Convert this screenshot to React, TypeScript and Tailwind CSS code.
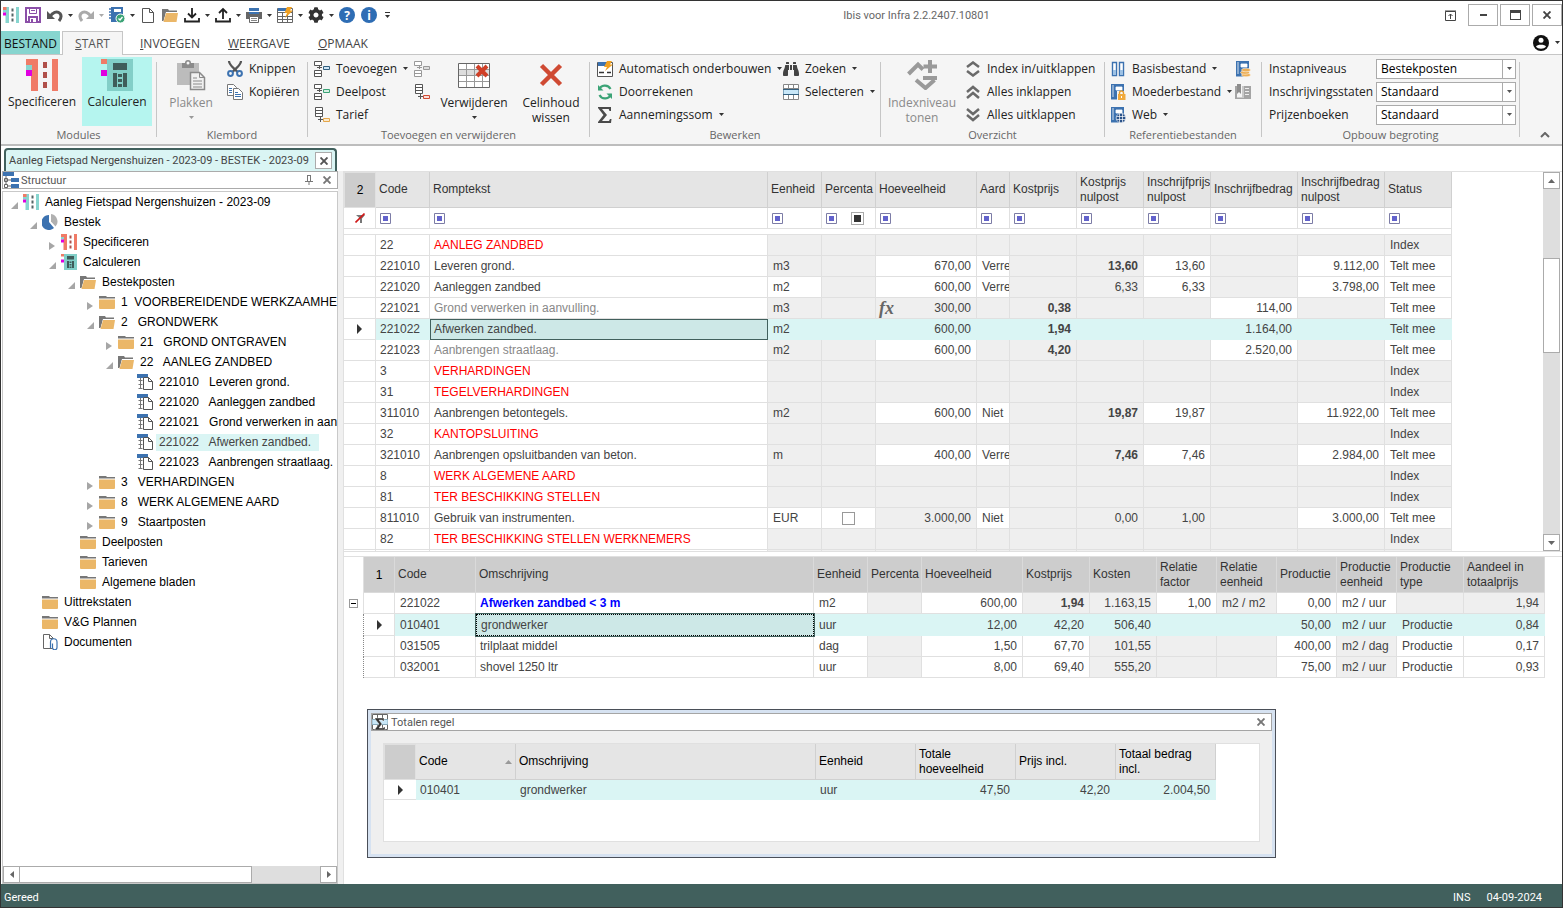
import type { ReactNode } from "react";
import clsx from "clsx";
import { FaBinoculars, FaCog } from "react-icons/fa";

/* ---------- Icons ---------- */

type IconProps = { size?: number; w?: number; h?: number; box?: string; children: ReactNode };

function Svg({ size = 16, w, h, box = "0 0 16 16", children }: IconProps) {
  return (
    <svg
      width={w ?? size}
      height={h ?? size}
      viewBox={box}
      fill="none"
      className="shrink-0"
      aria-hidden="true"
    >
      {children}
    </svg>
  );
}

const Caret = ({ color = "#333" }: { color?: string }) => (
  <Svg w={5} h={3} box="0 0 5 3">
    <path d="M0 0h5L2.500 3z" fill={color} />
  </Svg>
);

const LogoIcon = ({ size = 16, main = "#87d5cf", dots = "#566" }) => (
  <Svg size={size} box="0 0 32 32">
    <path d="M5 0h7v32H5zM26 0h6v32h-6z" fill={main} />
    <path d="M0 0h7v6H0z" fill="#f07b67" />
    <path d="M0 6h6v5H0z" fill="#87d5cf" />
    <path d="M0 11h6v6H0z" fill="#e000e0" />
    <path d="M17 3h4v6h-4zM17 13h4v6h-4zM17 23h4v6h-4z" fill={dots} />
  </Svg>
);

const SpecIcon = ({ size = 16 }) => <LogoIcon size={size} main="#f07b67" dots="#b0504a" />;

const CalcIcon = ({ size = 16 }) => (
  <Svg size={size} box="0 0 32 32">
    <path d="M6 0h26v32H6z" fill="#82cfc8" />
    <path d="M0 0h6v5H0z" fill="#f07b67" />
    <path d="M0 11h6v6H0z" fill="#e000e0" />
    <path d="M12 4h14v7H12zM12 14h4v14h-4zM22 14h4v14h-4zM17 15h4v3h-4zM17 20h4v3h-4zM17 25h4v3h-4z" fill="#3f5c5a" />
  </Svg>
);

const SaveIcon = () => (
  <Svg>
    <path d="M1 1h14v14H1z" fill="#fff" stroke="#8b4fa8" strokeWidth="2" />
    <path d="M4.500 2v4.500h7V2" stroke="#8b4fa8" />
    <path d="M6 3.500h4" stroke="#8b4fa8" />
    <path d="M3 9h10v6H3z" fill="#8b4fa8" />
    <path d="M5 11h6v4H5z" fill="#fff" />
    <path d="M6 12h2v3H6z" fill="#8b4fa8" />
  </Svg>
);

const UndoIcon = ({ color = "#555", flip = false }) => (
  <Svg>
    <g transform={flip ? "matrix(-1 0 0 1 16 0)" : undefined}>
      <path d="M3 10C5 5.500 10 3.500 13 6.500c2 2.500 1 5-1 7.500" stroke={color} strokeWidth="3" />
      <path d="M0 4v8h8z" fill={color} />
    </g>
  </Svg>
);

const BookCheckIcon = () => (
  <Svg>
    <path d="M2 0h12v15H2z" fill="#3c72b0" />
    <path d="M5 2h7v3H5z" fill="#fff" />
    <path d="M0 2h4M0 5h4M0 8h4M0 11h4" stroke="#3c72b0" strokeWidth="1.500" />
    <circle cx="11.500" cy="11.500" r="4.500" fill="#3ba376" stroke="#fff" />
    <path d="m9.500 11.500 1.500 1.500 2.500-3" stroke="#fff" strokeWidth="1.300" />
  </Svg>
);

const NewIcon = () => (
  <Svg>
    <path d="M2.500 1.500h7l4 4v10h-11z" fill="#fff" stroke="#555" />
    <path d="M9.500 1.500v4h4" stroke="#555" />
  </Svg>
);

const OpenFolderIcon = () => (
  <Svg>
    <path d="M0 2h6l1 1.500h8V6H4l-2.500 8H0z" fill="#777" />
    <path d="M4 5h12l-1.500 10H1.500z" fill="#fff" />
    <path d="M4 6h12l-1.500 9H1.500z" fill="#ebb768" />
  </Svg>
);

const FolderIcon = () => (
  <Svg>
    <path d="M0 2h7l1 1h8v1.500H0z" fill="#777" />
    <path d="M0 5.500h16V14a1 1 0 0 1-1 1H1a1 1 0 0 1-1-1z" fill="#ebb768" />
  </Svg>
);

const DownloadIcon = () => (
  <Svg>
    <path d="M8 1v9M4 6.500 8 10.500l4-4" stroke="#222" strokeWidth="1.800" />
    <path d="M1 11v3.500h14V11" stroke="#222" strokeWidth="1.800" />
  </Svg>
);

const UploadIcon = () => (
  <Svg>
    <path d="M8 12V2M4 6l4-4 4 4" stroke="#222" strokeWidth="1.800" />
    <path d="M1 11v3.500h14V11" stroke="#222" strokeWidth="1.800" />
  </Svg>
);

const PrinterIcon = () => (
  <Svg>
    <path d="M3 1h10v3H3z" fill="#3c72b0" />
    <path d="M0 5h16v7H0z" fill="#666" />
    <path d="M3 5h10v2H3z" fill="#3c72b0" />
    <path d="M3.500 9.500h9v6h-9z" fill="#fff" stroke="#666" />
    <path d="M5 11.500h6M5 13.500h6" stroke="#888" />
  </Svg>
);

const TableFlashIcon = () => (
  <Svg>
    <path d="M.5 1.500h15v14H.5zM.5 5.500h15M.5 9.500h15M.5 12.500h15M5.500 5.500v10M10.500 5.500v10" stroke="#666" fill="#fff" />
    <path d="M1 1h8v3H1z" fill="#3c72b0" />
    <path d="M10 0h5l-2 3.500h3L8 11l2-5H7.500z" fill="#f0a020" />
  </Svg>
);

const Disc = ({ children }: { children: string }) => (
  <Svg>
    <circle cx="8" cy="8" r="8" fill="#2e6db4" />
    <text x="8" y="12.500" textAnchor="middle" fontSize="12" fontWeight="700" fill="#fff" fontFamily="Open Sans, sans-serif">
      {children}
    </text>
  </Svg>
);

const PasteIcon = () => (
  <Svg w={30} h={32} box="0 0 30 32">
    <path d="M1 4h22v22H1z" fill="#bcbcbc" />
    <path d="M6 4h3a3 3 0 0 1 6 0h3v5H6z" fill="#8a8a8a" />
    <circle cx="12" cy="4" r="1.500" fill="#f5f5f5" />
    <path d="M14.500 13.500h9l5 5v12h-14z" fill="#f0f0f0" stroke="#8a8a8a" strokeWidth="1.500" />
    <path d="M23.500 13.500v5h5M17 19h4M17 22h9M17 25h9M17 28h9" stroke="#8a8a8a" />
  </Svg>
);

const CutIcon = () => (
  <Svg>
    <path d="M2 0c0 4 4 6 8.500 11M14 0c0 4-4 6-8.500 11" stroke="#555" strokeWidth="2.200" />
    <circle cx="3.500" cy="12.500" r="2.400" stroke="#3c72b0" strokeWidth="2" />
    <circle cx="12.500" cy="12.500" r="2.400" stroke="#3c72b0" strokeWidth="2" />
  </Svg>
);

const CopyIcon = () => (
  <Svg>
    <path d="M.5.500h6l3 3v8h-9z" fill="#fff" stroke="#777" />
    <path d="M2 4.500h3M2 6.500h3M2 8.500h3" stroke="#3c72b0" />
    <path d="M6.500 4.500h5l4 4v7h-9z" fill="#fff" stroke="#777" />
    <path d="M8 8.500h3M8 10.500h6M8 12.500h6" stroke="#3c72b0" />
  </Svg>
);

function NodeIcon({ tone = "#34607f", fill = "#cfe6f7", gray = "#555", list = false }) {
  return (
    <Svg>
      {list ? (
        <path d="M1.500.500h7v9h-7zM1.500 3.500h7M1.500 6.500h7" fill="#fff" stroke={gray} />
      ) : (
        <path d="M.5.500h7v4h-7zM.5 9.500h7v6h-7zM.5 12.500h7" fill="#fff" stroke={gray} />
      )}
      <path d={list ? "M4 12.500h5M6.500 10v5" : "M3 6.500h5M5.500 5v3"} stroke={gray} />
      <path d={list ? "M9.500 11.500h6v3h-6z" : "M9.500 5.500h6v3h-6z"} fill={fill} stroke={tone} />
    </Svg>
  );
}

const DeleteGridIcon = () => (
  <Svg w={32} h={26} box="0 0 32 26">
    <path d="M.5 1.500h31v24H.5z" fill="#fff" />
    <path d="M1 7h31v6H1z" fill="#ddd" />
    <path d="M1 7.500h30M1 13.500h30M1 19.500h30M8.500 2v23M16.500 2v23M24.500 2v23" stroke="#999" />
    <path d="M.5 1.500h31v24H.5z" stroke="#666" />
    <path d="m19 4 10 10M29 4 19 14" stroke="#cf3f27" strokeWidth="4" />
  </Svg>
);

const ClearIcon = () => (
  <Svg w={24} h={24} box="0 0 24 24">
    <path d="m2.500 2.500 19 19M21.500 2.500l-19 19" stroke="#cf4a33" strokeWidth="4.500" />
  </Svg>
);

const AutoIcon = () => (
  <Svg>
    <path d="M.5 1.500h15v14H.5z" fill="#fff" stroke="#555" />
    <path d="M1 1h8v4H1z" fill="#3c72b0" />
    <path d="M2 11.500h5M10 11.500h4" stroke="#333" strokeWidth="1.500" />
    <path d="M10 0h5l-2 3.500h3L8 10l2-4H7z" fill="#f0a020" />
  </Svg>
);

const RefreshIcon = () => (
  <Svg>
    <path d="M2 6a6.200 6.200 0 0 1 11.500-1M14 10a6.200 6.200 0 0 1-11.500 1" stroke="#3ba376" strokeWidth="2.200" />
    <path d="M1 1v5.500h5.500zM15 15V9.500H9.500z" fill="#3ba376" />
  </Svg>
);

const SigmaIcon = () => (
  <Svg>
    <path d="M1 0h13v4h-1.500l-.8-2H5l5 6-5 6h7l1-2h1.500l-.5 4H1v-1l5.500-7L1 1z" fill="#4a4a4a" />
  </Svg>
);

const SelectRowsIcon = () => (
  <Svg>
    <path d="M.5.500h15v15H.5zM.5 4.500h15M5.500.500v15M10.500.500v15" fill="#fff" stroke="#888" />
    <path d="M0 5.500h16v5H0z" fill="#c8e7f8" stroke="#34607f" />
  </Svg>
);

const IndexLevelIcon = () => (
  <Svg w={30} h={30} box="0 0 30 30">
    <path d="m1.500 14 9.500-9.500 5 5M9 20l9.500 8 9-8" stroke="#9a9a9a" strokeWidth="4" />
    <path d="M23 0v13M16.500 6.500H30M16 18h14" stroke="#9a9a9a" strokeWidth="4" />
  </Svg>
);

const Chevrons = ({ d }: { d: string }) => (
  <Svg>
    <path d={d} stroke="#6a6a6a" strokeWidth="2.500" />
  </Svg>
);

const BindersIcon = () => (
  <Svg>
    <path d="M2.500 1.500h4v13h-4zM9.500 1.500h4v13h-4z" fill="#fff" stroke="#3c72b0" strokeWidth="1.400" />
    <path d="M3 9h3v5H3zM10 9h3v5h-3z" fill="#9dc1e4" />
  </Svg>
);

const BookIcon = ({ children }: { children: ReactNode }) => (
  <Svg>
    <path d="M1 0h13v13H1z" fill="#3c72b0" />
    <path d="M3 1v12M6 3h6v3H6z" stroke="#fff" fill="#fff" strokeWidth=".8" />
    <path d="M1 13h8v2.500H1z" fill="#3c72b0" />
    {children}
  </Svg>
);

const LockBook = () => (
  <BookIcon>
    <path d="M7 7h9v9H7z" fill="#f5f5f5" />
    <path d="M9.500 10V9a2 2 0 0 1 4 0v1" stroke="#e59b2b" strokeWidth="1.400" />
    <path d="M8 10h7.500v6H8z" fill="#f0a93c" />
    <path d="M11 12h1v2h-1z" fill="#fff" />
  </BookIcon>
);

const WebBook = () => (
  <BookIcon>
    <circle cx="11" cy="11" r="4.800" fill="#2a5289" stroke="#fff" strokeWidth=".6" />
    <path d="M6.500 9.500h9M6.500 12.500h9M9.500 6.500v9M12.500 6.500v9" stroke="#fff" strokeWidth=".7" />
  </BookIcon>
);

const CoinBook = () => (
  <BookIcon>
    <ellipse cx="11" cy="14" rx="4.500" ry="1.800" fill="#ecae55" stroke="#fff" strokeWidth=".5" />
    <ellipse cx="10" cy="11.500" rx="4.500" ry="1.800" fill="#ecae55" stroke="#fff" strokeWidth=".5" />
    <ellipse cx="11" cy="9" rx="4.500" ry="1.800" fill="#ecae55" stroke="#fff" strokeWidth=".5" />
  </BookIcon>
);

const GrayBook = () => (
  <Svg>
    <path d="M0 2h2v13H0zM7 2h9v13H0v-1.500h7z" fill="#a4a4a4" />
    <path d="M2 0h4v10L4 8l-2 2z" fill="#8d8d8d" />
    <path d="M10 4.500h4M10 7.500h4M10 10.500h4M8 2v12" stroke="#eee" />
  </Svg>
);

const PieIcon = () => (
  <Svg>
    <path d="M7 1v7l5 6A7.500 7.500 0 1 1 7 1z" fill="#3c72b0" />
    <path d="M9 0a7.500 7.500 0 0 1 4.500 12.500L9 7.500z" fill="#b0b0b0" />
  </Svg>
);

const PostIcon = () => (
  <Svg>
    <path d="M0 0h11v4H0z" fill="#3c72b0" />
    <path d="M3.500 4v10.500M1.500 6.500h4M1.500 10.500h4M1.500 14.500h4" stroke="#777" />
    <path d="M6.500 3.500h5l4 4v8h-9z" fill="#fff" stroke="#555" />
    <path d="M11.500 3.500v4h4" stroke="#555" />
  </Svg>
);

const DocumentsIcon = () => (
  <Svg>
    <path d="M1.500.500h6l4 4v10h-10z" fill="#fff" stroke="#666" />
    <path d="M7.500.500v4h4" stroke="#666" />
    <path d="M8.500 14V8a3 3 0 0 1 6.500 0v5.500a2 2 0 0 1-4.500 0V9.500" fill="#fff" stroke="#3c72b0" strokeWidth="1.200" />
  </Svg>
);

const StructureIcon = () => (
  <Svg>
    <path d="M0 0h11v4H0zM8 6h8v4H8zM8 12h8v4H8z" fill="#3c72b0" />
    <path d="M1.500 6.500h3v3h-3zM1.500 12.500h3v3h-3zM3 4v8M5 8h3M5 14h3" stroke="#666" />
  </Svg>
);

const TotalsIcon = () => (
  <Svg>
    <path d="M.5.500h15v15H.5zM5.500.500v15M10.500.500v15" fill="#fff" stroke="#666" />
    <path d="M0 5.500h16v5H0z" fill="#c8e7f8" stroke="#8ab" />
    <path d="M3 4h9v3h-1.500V6H7l3 4-3 4h4.500v-1H13v3H3v-1l4-5-4-5z" fill="#333" stroke="#fff" strokeWidth=".4" />
  </Svg>
);

const CloseIcon = ({ size = 8, color = "#555" }) => (
  <Svg size={size} box="0 0 8 8">
    <path d="m.5.500 7 7M7.500.500l-7 7" stroke={color} strokeWidth="1.900" />
  </Svg>
);

const PinIcon = () => (
  <Svg w={8} h={10} box="0 0 8 10">
    <path d="M2.500 0v6M5.500 0v6M2 .5h4M0 6.500h8M4 7v3" stroke="#777" />
  </Svg>
);

const UserIcon = () => (
  <Svg>
    <circle cx="8" cy="8" r="8" fill="#111" />
    <circle cx="8" cy="5.300" r="2.500" fill="#fff" />
    <path d="M3 11.500C4 9 12 9 13 11.500c-2 3-8 3-10 0z" fill="#fff" />
  </Svg>
);

const Marker = () => (
  <Svg w={5} h={10} box="0 0 5 10">
    <path d="M0 0v10l5-5z" fill="#333" />
  </Svg>
);

const FilterSquare = () => (
  <Svg size={11} box="0 0 11 11">
    <path d="M.5.500h10v10H.5z" fill="#fff" stroke="#7c7ca6" />
    <path d="M3 3h5v5H3z" fill="#6262cc" />
  </Svg>
);

const FilterOffIcon = () => (
  <Svg size={10} box="0 0 10 10">
    <path d="M1 2h9L7 5.500V10H5V5.500z" fill="#777" />
    <path d="m.5 9.500 9-9" stroke="#d01818" strokeWidth="1.600" />
  </Svg>
);

/* ---------- Title bar ---------- */

type QuickItem = { label: string; icon: ReactNode; menu?: string };

const quickItems: QuickItem[] = [
  { label: "Ibis", icon: <LogoIcon /> },
  { label: "Opslaan", icon: <SaveIcon /> },
  { label: "Ongedaan maken", icon: <UndoIcon />, menu: "#333" },
  { label: "Opnieuw", icon: <UndoIcon color="#aaa" flip />, menu: "#aaa" },
  { label: "Controleren", icon: <BookCheckIcon />, menu: "#333" },
  { label: "Nieuw", icon: <NewIcon /> },
  { label: "Openen", icon: <OpenFolderIcon /> },
  { label: "Importeren", icon: <DownloadIcon />, menu: "#333" },
  { label: "Exporteren", icon: <UploadIcon />, menu: "#333" },
  { label: "Afdrukken", icon: <PrinterIcon />, menu: "#333" },
  { label: "Tabel", icon: <TableFlashIcon />, menu: "#333" },
  { label: "Instellingen", icon: <FaCog size={16} color="#333" />, menu: "#333" },
  { label: "Help", icon: <Disc>?</Disc> },
  { label: "Info", icon: <Disc>i</Disc> },
];

const windowButton = "flex h-[22px] w-[30px] items-center justify-center border border-[#ababab] bg-white";

function TitleBar() {
  return (
    <header className="relative mb-0.5 flex h-7 items-center justify-between pl-0.5">
      <div className="flex items-center">
        {quickItems.map((item) => (
          <button
            key={item.label}
            aria-label={item.label}
            className={clsx("flex items-center", item.menu ? "gap-[5px] pr-[5px]" : "pr-1.5")}
          >
            {item.icon}
            {item.menu && <Caret color={item.menu} />}
          </button>
        ))}
        <button aria-label="Werkbalk aanpassen" className="ml-0.5 flex flex-col gap-0.5">
          <span className="h-px w-[5px] bg-[#333]" />
          <Caret />
        </button>
      </div>
      <h1 className="absolute left-1/2 w-[270px] pt-0.5 text-center font-[Roboto,sans-serif] text-[11px] text-[#666]">
        Ibis voor Infra 2.2.2407.10801
      </h1>
      <div className="flex items-center gap-0.5">
        <button aria-label="Lint weergave" className="mr-2.5">
          <Svg w={11} h={11} box="0 0 11 11">
            <path d="M.5 1.500h10v9H.5zM0 1h11M5.500 4v5M3.500 6l2-2 2 2" stroke="#444" />
          </Svg>
        </button>
        <button aria-label="Minimaliseren" className={windowButton}>
          <span className="h-0.5 w-[7px] bg-[#444]" />
        </button>
        <button aria-label="Maximaliseren" className={windowButton}>
          <span className="h-2.5 w-[11px] border border-t-[3px] border-[#444]" />
        </button>
        <button aria-label="Sluiten" className={windowButton}>
          <CloseIcon color="#444" />
        </button>
      </div>
    </header>
  );
}

const ribbonTabs = ["INVOEGEN", "WEERGAVE", "OPMAAK"];

function RibbonTabs() {
  return (
    <nav className="flex h-[23px] items-stretch text-xs text-[#444]">
      <button className="w-[59px] bg-[#87d5cf] pt-0.5 text-[#111]">BESTAND</button>
      <button className="z-10 ml-0.5 -mb-px w-[61px] border border-b-0 border-[#c6c6c6] bg-[#f5f5f5] text-[#555]">
        <u>S</u>TART
      </button>
      <div className="ml-[17px] flex gap-7 pt-0.5">
        {ribbonTabs.map((tab) => (
          <button key={tab}>
            <u>{tab[0]}</u>
            {tab.slice(1)}
          </button>
        ))}
      </div>
      <button aria-label="Account" className="ml-auto flex items-center gap-1.5 pr-0.5">
        <UserIcon />
        <Caret />
      </button>
    </nav>
  );
}

/* ---------- Ribbon ---------- */

function Group({ title, className, children }: { title: string; className: string; children: ReactNode }) {
  return (
    <section className={clsx("flex shrink-0", className)}>
      <div className="flex min-w-0 flex-1 flex-col">
        <div className="flex flex-1 pt-0.5">{children}</div>
        <h2 className="h-[18px] text-center text-[11px] leading-[18px] text-[#666]">{title}</h2>
      </div>
      <span className="my-[7px] w-px bg-[#c6c6c6]" />
    </section>
  );
}

type BigProps = { icon: ReactNode; label: string; className: string; menu?: string; muted?: boolean; tall?: boolean };

function BigButton({ icon, label, className, menu, muted, tall }: BigProps) {
  return (
    <button
      className={clsx("flex h-[69px] flex-col items-center leading-[15px]", className, muted ? "text-[#8a8a8a]" : "text-[#222]")}
    >
      <span className="flex h-9 items-center">{icon}</span>
      <span className={clsx("whitespace-pre-line", tall ? "mt-0.5" : "mt-px")}>{label}</span>
      {menu && (
        <span className="mt-1.5 block">
          <Caret color={menu} />
        </span>
      )}
    </button>
  );
}

function SmallButton({ icon, label, menu }: { icon: ReactNode; label: string; menu?: boolean }) {
  return (
    <button className="flex h-[23px] items-center whitespace-nowrap text-[#222]">
      {icon}
      <span className="mr-1.5 ml-1.5">{label}</span>
      {menu && <Caret />}
    </button>
  );
}

const selects = [
  { id: "instap", label: "Instapniveaus", value: "Bestekposten" },
  { id: "inschrijving", label: "Inschrijvingsstaten", value: "Standaard" },
  { id: "prijzen", label: "Prijzenboeken", value: "Standaard" },
];

function Ribbon() {
  return (
    <div className="flex h-[92px] overflow-hidden border-t border-b-2 border-t-[#c6c6c6] border-b-[#bdbdbd] bg-[#f5f5f5] text-xs">
      <Group title="Modules" className="w-[156px]">
        <BigButton icon={<SpecIcon size={32} />} label="Specificeren" className="ml-[3px] w-[76px]" />
        <BigButton icon={<CalcIcon size={32} />} label="Calculeren" className="ml-0.5 w-[70px] bg-[#b5f5ef]" />
      </Group>
      <Group title="Klembord" className="w-[151px]">
        <BigButton icon={<PasteIcon />} label="Plakken" menu="#999" muted tall className="ml-1.5 w-14" />
        <div className="ml-2">
          <SmallButton icon={<CutIcon />} label="Knippen" />
          <SmallButton icon={<CopyIcon />} label="Kopiëren" />
        </div>
      </Group>
      <Group title="Toevoegen en verwijderen" className="w-[282px]">
        <div className="ml-1.5 w-[100px]">
          <SmallButton icon={<NodeIcon />} label="Toevoegen" menu />
          <SmallButton icon={<NodeIcon tone="#3ba376" fill="#d5efe3" />} label="Deelpost" />
          <SmallButton icon={<NodeIcon tone="#e5a74b" fill="#fbe9cb" list />} label="Tarief" />
        </div>
        <div className="flex w-4 flex-col">
          <button aria-label="Post toevoegen" className="h-[23px]">
            <NodeIcon tone="#999" fill="#ddd" gray="#999" />
          </button>
          <button aria-label="Post verwijderen" className="h-[23px]">
            <NodeIcon tone="#cf4a33" fill="#f9dcd7" list />
          </button>
        </div>
        <BigButton icon={<DeleteGridIcon />} label="Verwijderen" menu="#333" tall className="ml-2 w-[72px]" />
        <BigButton icon={<ClearIcon />} label={"Celinhoud\nwissen"} tall className="ml-1.5 w-[70px]" />
      </Group>
      <Group title="Bewerken" className="w-[291px]">
        <div className="ml-[7px] w-[186px]">
          <SmallButton icon={<AutoIcon />} label="Automatisch onderbouwen" menu />
          <SmallButton icon={<RefreshIcon />} label="Doorrekenen" />
          <SmallButton icon={<SigmaIcon />} label="Aannemingssom" menu />
        </div>
        <div>
          <SmallButton icon={<FaBinoculars size={16} color="#444" />} label="Zoeken" menu />
          <SmallButton icon={<SelectRowsIcon />} label="Selecteren" menu />
        </div>
      </Group>
      <Group title="Overzicht" className="w-[224px]">
        <BigButton icon={<IndexLevelIcon />} label={"Indexniveau\ntonen"} muted tall className="ml-1 w-[74px]" />
        <div className="ml-1.5">
          <SmallButton icon={<Chevrons d="m2 6 6-4.500L14 6M2 10l6 4.500 6-4.500" />} label="Index in/uitklappen" />
          <SmallButton icon={<Chevrons d="m2 8 6-5 6 5M2 14l6-5 6 5" />} label="Alles inklappen" />
          <SmallButton icon={<Chevrons d="m2 2 6 5 6-5M2 8l6 5 6-5" />} label="Alles uitklappen" />
        </div>
      </Group>
      <Group title="Referentiebestanden" className="w-[157px]">
        <div className="ml-[5px] w-[125px]">
          <SmallButton icon={<BindersIcon />} label="Basisbestand" menu />
          <SmallButton icon={<LockBook />} label="Moederbestand" menu />
          <SmallButton icon={<WebBook />} label="Web" menu />
        </div>
        <div className="flex flex-col">
          <button aria-label="Prijzen" className="h-[23px]">
            <CoinBook />
          </button>
          <button aria-label="Catalogus" className="h-[23px]">
            <GrayBook />
          </button>
        </div>
      </Group>
      <Group title="Opbouw begroting" className="w-[258px]">
        <div className="flex flex-1 flex-col pr-[3px] pl-[7px]">
          {selects.map((item) => (
            <div key={item.id} className="flex h-[23px] items-center justify-between">
              <label htmlFor={item.id} className="whitespace-nowrap text-[#222]">
                {item.label}
              </label>
              <div className="relative h-5 w-[140px]">
                <select id={item.id} className="h-5 w-full appearance-none border border-[#ababab] bg-white px-1 text-xs text-black">
                  <option>{item.value}</option>
                </select>
                <span className="pointer-events-none absolute inset-y-0 right-0 flex w-3.5 items-center justify-center border border-[#ababab]">
                  <Caret color="#555" />
                </span>
              </div>
            </div>
          ))}
        </div>
      </Group>
      <button aria-label="Lint inklappen" className="mr-3 mb-1.5 ml-auto self-end">
        <Svg w={10} h={6} box="0 0 10 6">
          <path d="m1 5 4-4 4 4" stroke="#666" strokeWidth="2" />
        </Svg>
      </button>
    </div>
  );
}

/* ---------- Structure tree ---------- */

type Node = { level: number; label: string; icon: ReactNode; open?: boolean; selected?: boolean };

const tree: Node[] = [
  { level: 0, label: "Aanleg Fietspad Nergenshuizen - 2023-09", icon: <LogoIcon />, open: true },
  { level: 1, label: "Bestek", icon: <PieIcon />, open: true },
  { level: 2, label: "Specificeren", icon: <SpecIcon />, open: false },
  { level: 2, label: "Calculeren", icon: <CalcIcon />, open: true },
  { level: 3, label: "Bestekposten", icon: <OpenFolderIcon />, open: true },
  { level: 4, label: "1  VOORBEREIDENDE WERKZAAMHE", icon: <FolderIcon />, open: false },
  { level: 4, label: "2   GRONDWERK", icon: <OpenFolderIcon />, open: true },
  { level: 5, label: "21   GROND ONTGRAVEN", icon: <FolderIcon />, open: false },
  { level: 5, label: "22   AANLEG ZANDBED", icon: <OpenFolderIcon />, open: true },
  { level: 6, label: "221010   Leveren grond.", icon: <PostIcon /> },
  { level: 6, label: "221020   Aanleggen zandbed", icon: <PostIcon /> },
  { level: 6, label: "221021   Grond verwerken in aan", icon: <PostIcon /> },
  { level: 6, label: "221022   Afwerken zandbed.", icon: <PostIcon />, selected: true },
  { level: 6, label: "221023   Aanbrengen straatlaag.", icon: <PostIcon /> },
  { level: 4, label: "3   VERHARDINGEN", icon: <FolderIcon />, open: false },
  { level: 4, label: "8   WERK ALGEMENE AARD", icon: <FolderIcon />, open: false },
  { level: 4, label: "9   Staartposten", icon: <FolderIcon />, open: false },
  { level: 3, label: "Deelposten", icon: <FolderIcon /> },
  { level: 3, label: "Tarieven", icon: <FolderIcon /> },
  { level: 3, label: "Algemene bladen", icon: <FolderIcon /> },
  { level: 1, label: "Uittrekstaten", icon: <FolderIcon /> },
  { level: 1, label: "V&G Plannen", icon: <FolderIcon /> },
  { level: 1, label: "Documenten", icon: <DocumentsIcon /> },
];

function TreeRow({ node }: { node: Node }) {
  return (
    <li className="flex h-5 items-center" style={{ paddingLeft: 8 + node.level * 19 }}>
      <span className="flex w-3 shrink-0 pt-2">
        {node.open !== undefined && (
          <Svg w={7} h={8} box="0 0 7 8">
            <path d={node.open ? "M7 0v7H0z" : "M0 0v8l6-4z"} fill="#a6a6a6" />
          </Svg>
        )}
      </span>
      {node.icon}
      <span
        className={clsx(
          "ml-[3px] pl-[3px] leading-[17px] whitespace-pre",
          node.selected ? "bg-[#daf5f4] pr-2 text-[#444]" : "text-black"
        )}
      >
        {node.label}
      </span>
    </li>
  );
}

const scrollButton = "flex h-[17px] w-[17px] shrink-0 items-center justify-center border border-[#ababab] bg-white";

function StructurePanel() {
  return (
    <aside className="flex w-[336px] shrink-0 flex-col">
      <div className="flex h-[18px] items-center border border-[#ababab] pr-1.5 text-[#555]">
        <StructureIcon />
        <h2 className="ml-0.5 pt-0.5 font-[Roboto,sans-serif] text-[11px]">Structuur</h2>
        <button aria-label="Vastzetten" className="mr-2.5 ml-auto">
          <PinIcon />
        </button>
        <button aria-label="Paneel sluiten">
          <CloseIcon color="#777" />
        </button>
      </div>
      <div className="mt-0.5 flex min-h-0 flex-1 flex-col border border-[#c9c9c9]">
        <ul className="min-h-0 flex-1 overflow-hidden text-xs">
          {tree.map((node) => (
            <TreeRow key={node.label} node={node} />
          ))}
        </ul>
        <div className="flex h-[17px] bg-[#dedede]">
          <button aria-label="Naar links" className={scrollButton}>
            <Svg w={4} h={7} box="0 0 4 7">
              <path d="M4 0v7L0 3.500z" fill="#666" />
            </Svg>
          </button>
          <span className="w-[232px] border border-l-0 border-[#ababab] bg-white" />
          <button aria-label="Naar rechts" className={clsx(scrollButton, "ml-auto")}>
            <Svg w={4} h={7} box="0 0 4 7">
              <path d="M0 0v7l4-3.500z" fill="#666" />
            </Svg>
          </button>
        </div>
      </div>
    </aside>
  );
}

/* ---------- Grids ---------- */

type Cell = { v?: ReactNode; white?: boolean; bold?: boolean };

const g = (v?: ReactNode): Cell => ({ v });
const w = (v?: ReactNode): Cell => ({ v, white: true });
const gb = (v: ReactNode): Cell => ({ v, bold: true });

type Column = { title: string; width: number; right?: boolean };

const postColumns: Column[] = [
  { title: "Code", width: 54 },
  { title: "Romptekst", width: 338 },
  { title: "Eenheid", width: 54 },
  { title: "Percenta", width: 54 },
  { title: "Hoeveelheid", width: 101, right: true },
  { title: "Aard", width: 33 },
  { title: "Kostprijs", width: 67, right: true },
  { title: "Kostprijs\nnulpost", width: 67, right: true },
  { title: "Inschrijfprijs\nnulpost", width: 67, right: true },
  { title: "Inschrijfbedrag", width: 87, right: true },
  { title: "Inschrijfbedrag\nnulpost", width: 87, right: true },
  { title: "Status", width: 67 },
];

type PostRow = { code: string; name: string; kind?: "index" | "zero"; active?: boolean; cells?: Cell[] };

const Formula = ({ children }: { children: string }) => (
  <span className="flex justify-between">
    <i className="ml-[3px] font-['Liberation_Serif',serif] text-lg leading-5 font-bold text-[#666]">fx</i>
    {children}
  </span>
);

const UnitBox = () => (
  <input type="checkbox" aria-label="Percentage" className="mx-auto block h-[13px] w-[13px] appearance-none border border-[#999] bg-white" />
);

const posts: PostRow[] = [
  { code: "22", name: "AANLEG ZANDBED", kind: "index" },
  {
    code: "221010",
    name: "Leveren grond.",
    cells: [g("m3"), g(), w("670,00"), w("Verre"), g(), gb("13,60"), w("13,60"), g(), w("9.112,00"), w("Telt mee")],
  },
  {
    code: "221020",
    name: "Aanleggen zandbed",
    cells: [w("m2"), g(), w("600,00"), w("Verre"), g(), g("6,33"), w("6,33"), g(), w("3.798,00"), w("Telt mee")],
  },
  {
    code: "221021",
    name: "Grond verwerken in aanvulling.",
    kind: "zero",
    cells: [g("m3"), g(), g(<Formula>300,00</Formula>), g(), gb("0,38"), g(), g(), w("114,00"), g(), w("Telt mee")],
  },
  {
    code: "221022",
    name: "Afwerken zandbed.",
    active: true,
    cells: [g("m2"), g(), w("600,00"), g(), gb("1,94"), g(), g(), w("1.164,00"), g(), w("Telt mee")],
  },
  {
    code: "221023",
    name: "Aanbrengen straatlaag.",
    kind: "zero",
    cells: [g("m2"), g(), w("600,00"), g(), gb("4,20"), g(), g(), w("2.520,00"), g(), w("Telt mee")],
  },
  { code: "3", name: "VERHARDINGEN", kind: "index" },
  { code: "31", name: "TEGELVERHARDINGEN", kind: "index" },
  {
    code: "311010",
    name: "Aanbrengen betontegels.",
    cells: [g("m2"), g(), w("600,00"), w("Niet"), g(), gb("19,87"), w("19,87"), g(), w("11.922,00"), w("Telt mee")],
  },
  { code: "32", name: "KANTOPSLUITING", kind: "index" },
  {
    code: "321010",
    name: "Aanbrengen opsluitbanden van beton.",
    cells: [g("m"), g(), w("400,00"), w("Verre"), g(), gb("7,46"), w("7,46"), g(), w("2.984,00"), w("Telt mee")],
  },
  { code: "8", name: "WERK ALGEMENE AARD", kind: "index" },
  { code: "81", name: "TER BESCHIKKING STELLEN", kind: "index" },
  {
    code: "811010",
    name: "Gebruik van instrumenten.",
    cells: [w("EUR"), w(<UnitBox />), g("3.000,00"), w("Niet"), g(), g("0,00"), g("1,00"), g(), w("3.000,00"), w("Telt mee")],
  },
  { code: "82", name: "TER BESCHIKKING STELLEN WERKNEMERS", kind: "index" },
  { code: "", name: "", kind: "index" },
];

const indexCells = (status: string): Cell[] => [g(), g(), g(), g(), g(), g(), g(), g(), g(), g(status)];

const line = "border-r border-b border-[#e0e0e0]";
const activeLine = "border-r border-b border-[#daf5f4] bg-[#daf5f4]";
const cellText = "overflow-hidden whitespace-nowrap";

function HeadCell({ title, dark }: { title: string; dark?: boolean }) {
  return (
    <th
      scope="col"
      className={clsx(
        "overflow-hidden border-r border-b px-[3px] text-left align-middle leading-[15px] font-normal whitespace-pre text-[#333]",
        dark ? "border-[#dadada] bg-[#cdcdcd]" : "border-[#d0d0d0] bg-[#e5e5e5]"
      )}
    >
      {title}
    </th>
  );
}

function Columns({ columns, lead }: { columns: Column[]; lead: number[] }) {
  return (
    <colgroup>
      {lead.map((width, i) => (
        <col key={i} style={{ width }} />
      ))}
      {columns.map((column, i) => (
        <col key={i} style={{ width: column.width }} />
      ))}
    </colgroup>
  );
}

function PostGrid() {
  return (
    <div className="flex h-[381px] shrink-0 overflow-hidden border-y border-[#e0e0e0]">
      <div className="min-w-0 flex-1 overflow-hidden">
        <table className="w-[1108px] table-fixed border-separate border-spacing-0 text-xs text-[#444]">
          <Columns columns={postColumns} lead={[32]} />
          <thead>
            <tr className="h-9">
              <th className="border border-[#e0e0e0] bg-[#cdcdcd] font-normal text-black">2</th>
              {postColumns.map((column) => (
                <HeadCell key={column.title} title={column.title} />
              ))}
            </tr>
            <tr className="h-[21px]">
              <td className={line}>
                <span className="flex justify-center">
                  <FilterOffIcon />
                </span>
              </td>
              {postColumns.map((column) => (
                <td key={column.title} className={clsx(line, "pl-1")}>
                  <span className="flex items-center gap-3.5">
                    <FilterSquare />
                    {column.title === "Percenta" && (
                      <span className="flex h-[13px] w-[13px] items-center justify-center border border-[#aaa]">
                        <span className="h-[7px] w-[7px] bg-[#333]" />
                      </span>
                    )}
                  </span>
                </td>
              ))}
            </tr>
            <tr className="h-1.5">
              <td colSpan={13} className={clsx(line, "p-0")} />
            </tr>
          </thead>
          <tbody>
            {posts.map((row) => (
              <tr key={row.code} className="h-[21px] leading-5">
                <td className={line}>
                  <span className="flex justify-center">{row.active && <Marker />}</span>
                </td>
                <td className={clsx("pl-1", row.active ? activeLine : line)}>{row.code}</td>
                <td
                  className={clsx(
                    cellText,
                    "pl-1",
                    row.active
                      ? "border-r border-b border-[#41605d] bg-[#cde8e7] outline-1 -outline-offset-1 outline-[#41605d]"
                      : line,
                    row.kind === "index" && "text-[#ff0000]",
                    row.kind === "zero" && "text-[#888]"
                  )}
                >
                  {row.name}
                </td>
                {(row.cells ?? indexCells(row.code && "Index")).map((cell, i) => (
                  <td
                    key={i}
                    className={clsx(
                      cellText,
                      postColumns[i + 2].right ? "pr-[5px] text-right" : "pl-[5px]",
                      i === 1 && "pr-[5px]",
                      row.active ? activeLine : line,
                      !row.active && !cell.white && "bg-[#efefef]",
                      cell.bold && "font-bold"
                    )}
                  >
                    {cell.v}
                  </td>
                ))}
              </tr>
            ))}
          </tbody>
        </table>
      </div>
      <div className="mr-0.5 flex w-[17px] flex-col bg-[#dedede]">
        <button aria-label="Omhoog" className={scrollButton}>
          <Svg w={7} h={4} box="0 0 7 4">
            <path d="M0 4h7L3.500 0z" fill="#666" />
          </Svg>
        </button>
        <span className="mt-[69px] h-[95px] border border-[#ababab] bg-white" />
        <button aria-label="Omlaag" className={clsx(scrollButton, "mt-auto")}>
          <Svg w={7} h={4} box="0 0 7 4">
            <path d="M0 0h7L3.500 4z" fill="#666" />
          </Svg>
        </button>
      </div>
    </div>
  );
}

const ruleColumns: Column[] = [
  { title: "Code", width: 81 },
  { title: "Omschrijving", width: 338 },
  { title: "Eenheid", width: 54 },
  { title: "Percenta", width: 54 },
  { title: "Hoeveelheid", width: 101, right: true },
  { title: "Kostprijs", width: 67, right: true },
  { title: "Kosten", width: 67, right: true },
  { title: "Relatie\nfactor", width: 60, right: true },
  { title: "Relatie\neenheid", width: 60 },
  { title: "Productie", width: 60, right: true },
  { title: "Productie\neenheid", width: 60 },
  { title: "Productie\ntype", width: 67 },
  { title: "Aandeel in\ntotaalprijs", width: 81, right: true },
];

const rules: Cell[][] = [
  [w("221022"), w("Afwerken zandbed < 3 m"), w("m2"), g(), w("600,00"), gb("1,94"), g("1.163,15"), w("1,00"), g("m2 / m2"), w("0,00"), w("m2 / uur"), g(), g("1,94")],
  [w("010401"), w("grondwerker"), w("uur"), g(), w("12,00"), w("42,20"), g("506,40"), g(), g(), w("50,00"), g("m2 / uur"), w("Productie"), w("0,84")],
  [w("031505"), w("trilplaat middel"), w("dag"), g(), w("1,50"), w("67,70"), g("101,55"), g(), g(), w("400,00"), g("m2 / dag"), w("Productie"), w("0,17")],
  [w("032001"), w("shovel 1250 ltr"), w("uur"), g(), w("8,00"), w("69,40"), g("555,20"), g(), g(), w("75,00"), g("m2 / uur"), w("Productie"), w("0,93")],
];

function ruleCellLine(active: boolean, column: number) {
  if (!active) return line;
  if (column !== 1) return activeLine;
  return "border border-dotted border-black bg-[#cde8e7] outline-1 outline-[#41605d]";
}

function RuleGrid() {
  return (
    <table className="w-[1201px] table-fixed border-separate border-spacing-0 text-xs text-[#444]">
      <Columns columns={ruleColumns} lead={[20, 31]} />
      <thead>
        <tr className="h-9">
          <td className="border-r border-[#e0e0e0]" />
          <th className="border-r border-b border-[#dadada] bg-[#cdcdcd] font-normal text-black">1</th>
          {ruleColumns.map((column) => (
            <HeadCell key={column.title} title={column.title} dark />
          ))}
        </tr>
      </thead>
      <tbody>
        {rules.map((cells, r) => {
          const active = r === 1;
          return (
            <tr key={r} className={clsx("leading-5", active ? "h-[22px]" : "h-[21px]")}>
              <td className={clsx("border-r", r === 0 ? "border-[#e0e0e0]" : "border-dotted border-[#888]")}>
                {r === 0 && (
                  <button aria-label="Inklappen" className="ml-[5px] flex h-[9px] w-[9px] items-center justify-center border border-[#999]">
                    <span className="h-px w-[5px] bg-black" />
                  </button>
                )}
              </td>
              <td className={line}>
                <span className="flex justify-center">{active && <Marker />}</span>
              </td>
              {cells.map((cell, i) => (
                <td
                  key={i}
                  className={clsx(
                    cellText,
                    ruleColumns[i].right ? "pr-[5px] text-right" : i === 1 ? "pl-1" : "pl-[5px]",
                    ruleCellLine(active, i),
                    !active && !cell.white && "bg-[#efefef]",
                    cell.bold && "font-bold",
                    r === 0 && i === 1 && "font-bold text-[#0000ff]"
                  )}
                >
                  {cell.v}
                </td>
              ))}
            </tr>
          );
        })}
      </tbody>
    </table>
  );
}

const totalColumns: Column[] = [
  { title: "Code", width: 100 },
  { title: "Omschrijving", width: 300 },
  { title: "Eenheid", width: 100 },
  { title: "Totale\nhoeveelheid", width: 100, right: true },
  { title: "Prijs incl.", width: 100, right: true },
  { title: "Totaal bedrag\nincl.", width: 100, right: true },
];

const totals = ["010401", "grondwerker", "uur", "47,50", "42,20", "2.004,50"];

function TotalsWindow() {
  return (
    <section className="mt-[31px] ml-[23px] w-[909px] border border-[#4a4f58] bg-[#d6e2f1] p-[3px]">
      <div className="flex h-[18px] items-center border border-[#a5a5a5] bg-white pr-1.5 text-[#555]">
        <TotalsIcon />
        <h2 className="ml-[3px] pt-0.5 font-[Roboto,sans-serif] text-[11px]">Totalen regel</h2>
        <button aria-label="Venster sluiten" className="ml-auto">
          <CloseIcon color="#777" />
        </button>
      </div>
      <div className="bg-[#efefef] p-3">
        <div className="h-[99px] border border-[#e0e0e0] bg-white">
          <table className="w-[832px] table-fixed border-separate border-spacing-0 text-xs text-[#444]">
            <Columns columns={totalColumns} lead={[32]} />
            <thead>
              <tr className="h-9">
                <th className="border border-[#e0e0e0] bg-[#cdcdcd]" />
                {totalColumns.map((column, i) => (
                  <th
                    key={column.title}
                    scope="col"
                    className="border-r border-b border-[#d0d0d0] bg-[#e5e5e5] px-[3px] text-left leading-[15px] font-normal whitespace-pre text-black"
                  >
                    <span className="flex items-center justify-between">
                      {column.title}
                      {i === 0 && (
                        <Svg w={7} h={4} box="0 0 7 4">
                          <path d="M0 4h7L3.500 0z" fill="#999" />
                        </Svg>
                      )}
                    </span>
                  </th>
                ))}
              </tr>
            </thead>
            <tbody>
              <tr className="h-5 leading-5">
                <td className="border-b border-[#e0e0e0]">
                  <span className="flex justify-center">
                    <Marker />
                  </span>
                </td>
                {totals.map((value, i) => (
                  <td key={value} className={clsx("bg-[#daf5f4]", totalColumns[i].right ? "pr-1.5 text-right" : "pl-1")}>
                    {value}
                  </td>
                ))}
              </tr>
            </tbody>
          </table>
        </div>
      </div>
    </section>
  );
}

/* ---------- App ---------- */

export default function App() {
  return (
    <div className="flex h-screen flex-col overflow-hidden border border-[#333] bg-white font-['Open_Sans','Noto_Sans',sans-serif]">
      <TitleBar />
      <RibbonTabs />
      <Ribbon />
      <div className="flex h-[25px] shrink-0 items-end pl-[3px]">
        <div className="flex h-[23px] w-[333px] items-center justify-between rounded-t-sm border-2 border-b-0 border-[#41605d] bg-[#daf5f4] px-[3px] font-[Roboto,sans-serif] text-[11px] text-[#444]">
          <span className="pt-0.5 whitespace-nowrap">Aanleg Fietspad Nergenshuizen - 2023-09 - BESTEK - 2023-09</span>
          <button aria-label="Tabblad sluiten" className="flex h-[17px] w-[17px] items-center justify-center border border-[#ababab] bg-white">
            <CloseIcon />
          </button>
        </div>
      </div>
      <main className="flex min-h-0 flex-1 pl-px font-['Liberation_Sans',Arial,sans-serif]">
        <StructurePanel />
        <div className="w-[5px] shrink-0 bg-[#f0f0f0]" />
        <div className="flex min-w-0 flex-1 flex-col border-l border-[#e0e0e0]">
          <PostGrid />
          <div className="h-1 shrink-0" />
          <div className="min-h-0 flex-1 overflow-hidden border-t border-[#e0e0e0]">
            <RuleGrid />
            <TotalsWindow />
          </div>
        </div>
      </main>
      <footer className="flex h-[23px] shrink-0 items-center bg-[#41605d] pt-1.5 pr-5 pl-[3px] font-[Roboto,sans-serif] text-[11px] text-white">
        <span>Gereed</span>
        <span className="ml-auto">INS</span>
        <span className="ml-4">04-09-2024</span>
      </footer>
    </div>
  );
}
